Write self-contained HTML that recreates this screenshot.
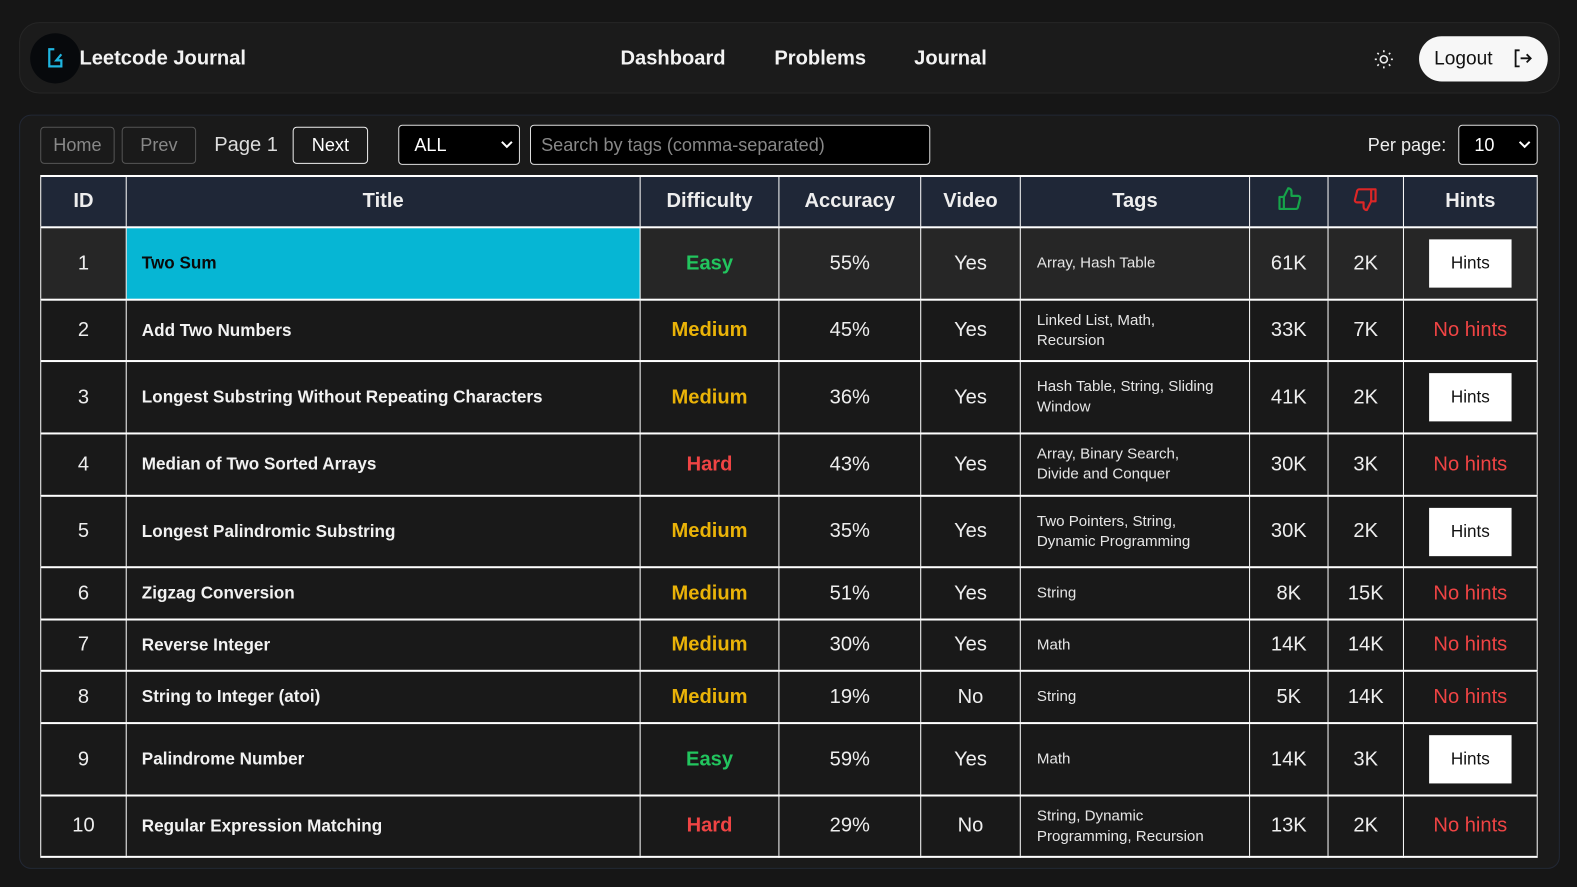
<!DOCTYPE html>
<html><head><meta charset="utf-8"><style>
*{box-sizing:border-box;margin:0;padding:0}
body{width:1577px;height:887px;background:#161616;font-family:"Liberation Sans",sans-serif;color:#eee;overflow:hidden}
#w{position:absolute;left:0;top:0;width:1568px;height:882px;transform:scale(1.0057);transform-origin:0 0}
.nav{position:absolute;left:19px;top:22px;width:1532px;height:71px;border:1px solid #262626;border-radius:20px;background:#1b1b1b}
.logo{position:absolute;left:10px;top:10px;width:50px;height:50px;border-radius:50%;background:#07090c}
.brand{position:absolute;left:59px;top:24px;font-size:20px;font-weight:bold;color:#f3f3f3}
.links{position:absolute;top:24px;font-size:20px;font-weight:bold;color:#f3f3f3}
.logout{position:absolute;left:1391px;top:13px;width:128px;height:45px;border-radius:23px;background:#f7f7f7;color:#111;font-size:19px;padding:12px 0 0 15px}
.panel{position:absolute;left:19px;top:114px;width:1532px;height:750px;border:1px solid #222835;border-radius:12px;background:#1a1a1a}
.btn{position:absolute;top:126px;height:37px;border:1px solid #555;border-radius:4px;font-size:18px;color:#888;text-align:center;line-height:35px}
.sel{position:absolute;top:124px;height:40px;border:1px solid #ddd;border-radius:4px;background:#000;font-size:18px;line-height:38px;padding-left:15px;color:#fff}
table{position:absolute;left:40px;top:174px;border-collapse:collapse;width:1488px;table-layout:fixed}
td,th{border:1px solid #fff;text-align:center;font-size:20px;color:#eee}
tr{border-top:2px solid #fff;border-bottom:2px solid #fff}
th{background:#1f2737;font-weight:bold;height:51px}
td{background:#191919}
tr.f td{background:#262626}
td.t{text-align:left;padding-left:15px;font-weight:bold;font-size:17px;color:#f2f2f2}
td.g{text-align:left;padding-left:16px;font-size:15px;line-height:20px;color:#e6e6e6}
.e{color:#22c55e;font-weight:bold}.m{color:#eab308;font-weight:bold}.h{color:#ef4444;font-weight:bold}
.nh{color:#ef4444}
.hb{display:inline-block;width:82px;height:48px;background:#fff;color:#111;font-size:17px;line-height:48px}
</style></head><body><div id="w">
<div class="nav">
 <div class="logo"><svg width="50" height="50" viewBox="0 0 50 50"><path d="M24 16h-5v17h12v-6h-5l5-6" fill="none" stroke="#1fb5e0" stroke-width="2.2"/></svg></div>
 <div class="brand">Leetcode Journal</div>
 <div class="links" style="left:597px">Dashboard</div>
 <div class="links" style="left:750px">Problems</div>
 <div class="links" style="left:889px">Journal</div>
 <svg style="position:absolute;left:1346px;top:26px" width="20" height="20" viewBox="0 0 20 20" stroke="#eee" stroke-width="1.6" fill="none"><circle cx="10" cy="10" r="3.5"/><path d="M10 1v2M10 17v2M1 10h2M17 10h2M3.6 3.6l1.4 1.4M15 15l1.4 1.4M3.6 16.4L5 15M15 5l1.4-1.4"/></svg>
 <div class="logout">Logout<svg style="position:absolute;left:93px;top:12px" width="20" height="20" viewBox="0 0 20 20" fill="none" stroke="#111" stroke-width="1.8"><path d="M7 2H3v16h4M8 10h10M14 6l4 4-4 4"/></svg></div>
</div>
<div class="panel"></div>
<div class="btn" style="left:40px;width:74px">Home</div>
<div class="btn" style="left:121px;width:74px">Prev</div>
<div style="position:absolute;left:213px;top:133px;font-size:20px;color:#ddd">Page 1</div>
<div class="btn" style="left:291px;width:75px;border-color:#eee;color:#fff">Next</div>
<div class="sel" style="left:396px;width:121px">ALL<svg style="position:absolute;right:6px;top:15px" width="12" height="8" viewBox="0 0 12 8"><path d="M1 1l5 5 5-5" stroke="#fff" stroke-width="2" fill="none"/></svg></div>
<div class="sel" style="left:527px;width:398px;color:#888;padding-left:10px">Search by tags (comma-separated)</div>
<div style="position:absolute;left:1360px;top:134px;font-size:18px;color:#eee">Per page:</div>
<div class="sel" style="left:1450px;width:79px">10<svg style="position:absolute;right:6px;top:15px" width="12" height="8" viewBox="0 0 12 8"><path d="M1 1l5 5 5-5" stroke="#fff" stroke-width="2" fill="none"/></svg></div>
<table>
<colgroup><col style="width:85px"><col style="width:511px"><col style="width:138px"><col style="width:141px"><col style="width:99px"><col style="width:228px"><col style="width:78px"><col style="width:75px"><col style="width:133px"></colgroup>
<tr><th>ID</th><th>Title</th><th>Difficulty</th><th>Accuracy</th><th>Video</th><th>Tags</th>
<th><svg width="26" height="26" viewBox="0 0 24 24" fill="none" stroke="#16a34a" stroke-width="2" stroke-linejoin="round"><path d="M7 10v11H3V10zM7 10l4-8a3 3 0 0 1 3 3v4h6a2 2 0 0 1 2 2l-2 8a2 2 0 0 1-2 2H7"/></svg></th>
<th><svg width="26" height="26" viewBox="0 0 24 24" fill="none" stroke="#dc2626" stroke-width="2" stroke-linejoin="round"><path d="M17 14V3h4v11zM17 14l-4 8a3 3 0 0 1-3-3v-4H4a2 2 0 0 1-2-2l2-8a2 2 0 0 1 2-2h11"/></svg></th><th>Hints</th></tr>
<tr class="f" style="height:72px"><td>1</td><td class="t" style="background:#06b6d4;color:#0a0a0a">Two Sum</td><td class="e">Easy</td><td>55%</td><td>Yes</td><td class="g">Array, Hash Table</td><td>61K</td><td>2K</td><td><span class="hb">Hints</span></td></tr>
<tr style="height:61px"><td>2</td><td class="t">Add Two Numbers</td><td class="m">Medium</td><td>45%</td><td>Yes</td><td class="g">Linked List, Math,<br>Recursion</td><td>33K</td><td>7K</td><td class="nh">No hints</td></tr>
<tr style="height:72px"><td>3</td><td class="t">Longest Substring Without Repeating Characters</td><td class="m">Medium</td><td>36%</td><td>Yes</td><td class="g">Hash Table, String, Sliding<br>Window</td><td>41K</td><td>2K</td><td><span class="hb">Hints</span></td></tr>
<tr style="height:62px"><td>4</td><td class="t">Median of Two Sorted Arrays</td><td class="h">Hard</td><td>43%</td><td>Yes</td><td class="g">Array, Binary Search,<br>Divide and Conquer</td><td>30K</td><td>3K</td><td class="nh">No hints</td></tr>
<tr style="height:71px"><td>5</td><td class="t">Longest Palindromic Substring</td><td class="m">Medium</td><td>35%</td><td>Yes</td><td class="g">Two Pointers, String,<br>Dynamic Programming</td><td>30K</td><td>2K</td><td><span class="hb">Hints</span></td></tr>
<tr style="height:52px"><td>6</td><td class="t">Zigzag Conversion</td><td class="m">Medium</td><td>51%</td><td>Yes</td><td class="g">String</td><td>8K</td><td>15K</td><td class="nh">No hints</td></tr>
<tr style="height:51px"><td>7</td><td class="t">Reverse Integer</td><td class="m">Medium</td><td>30%</td><td>Yes</td><td class="g">Math</td><td>14K</td><td>14K</td><td class="nh">No hints</td></tr>
<tr style="height:52px"><td>8</td><td class="t">String to Integer (atoi)</td><td class="m">Medium</td><td>19%</td><td>No</td><td class="g">String</td><td>5K</td><td>14K</td><td class="nh">No hints</td></tr>
<tr style="height:72px"><td>9</td><td class="t">Palindrome Number</td><td class="e">Easy</td><td>59%</td><td>Yes</td><td class="g">Math</td><td>14K</td><td>3K</td><td><span class="hb">Hints</span></td></tr>
<tr style="height:61px"><td>10</td><td class="t">Regular Expression Matching</td><td class="h">Hard</td><td>29%</td><td>No</td><td class="g">String, Dynamic<br>Programming, Recursion</td><td>13K</td><td>2K</td><td class="nh">No hints</td></tr>
</table>
</div></body></html>
